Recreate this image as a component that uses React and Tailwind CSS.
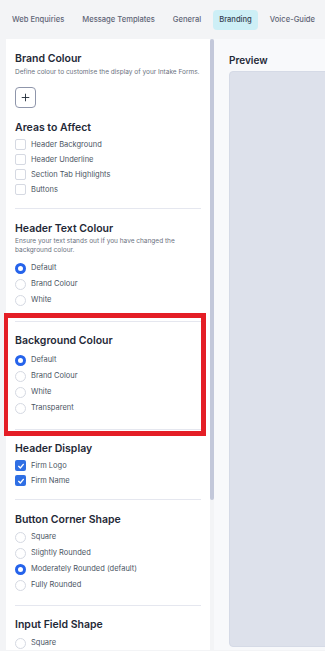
import { useState } from 'react';

const tabs = ['Web Enquiries', 'Message Templates', 'General', 'Branding', 'Voice-Guide'];

function Radio({ label, checked }) {
  return (
    <div className="flex h-[16px] items-center gap-[5px]">
      <span
        className={
          checked
            ? 'h-[11px] w-[11px] shrink-0 rounded-full border-[3px] border-[#2563eb] bg-white'
            : 'h-[11px] w-[11px] shrink-0 rounded-full border border-[#d5d9e2] bg-white'
        }
      />
      <span className="text-[7.5px] text-[#4b5563]">{label}</span>
    </div>
  );
}

function Checkbox({ label, checked }) {
  return (
    <div className="flex h-[15px] items-center gap-[5px]">
      {checked ? (
        <span className="flex h-[11px] w-[11px] shrink-0 items-center justify-center rounded-[2px] bg-[#2f6fe4]">
          <svg viewBox="0 0 12 12" className="h-[8px] w-[8px]" fill="none" stroke="white" strokeWidth="2" strokeLinecap="round" strokeLinejoin="round">
            <path d="M2.5 6.5l2.5 2.5 4.5-5.5" />
          </svg>
        </span>
      ) : (
        <span className="h-[11px] w-[11px] shrink-0 rounded-[2px] border border-[#d5d9e2] bg-white" />
      )}
      <span className="text-[7.5px] text-[#4b5563]">{label}</span>
    </div>
  );
}

function Title({ children }) {
  return <h3 className="h-[12px] text-[10.5px] font-semibold leading-[12px] text-[#1f2937]">{children}</h3>;
}

export default function App() {
  const [activeTab] = useState('Branding');

  return (
    <div className="relative flex h-[651px] w-[325px] flex-col overflow-hidden bg-[#f3f4f6] font-['Inter',sans-serif]">
      {/* Tabs */}
      <div className="flex h-[39px] shrink-0 items-center gap-[6px] pl-[6px]">
        {tabs.map((tab) => (
          <div
            key={tab}
            className={
              tab === activeTab
                ? 'flex h-[20px] items-center whitespace-nowrap rounded-[4px] bg-[#cdeff6] px-[6px] text-[7.6px] font-medium text-[#374151]'
                : 'flex h-[20px] items-center whitespace-nowrap px-[6px] text-[7.6px] font-medium text-[#5f6577]'
            }
          >
            {tab}
          </div>
        ))}
      </div>

      <div className="flex h-[611px] shrink-0">
        {/* Settings panel */}
        <div className="ml-[6px] w-[204px] shrink-0 overflow-hidden bg-white px-[9px]">
          {/* Brand Colour */}
          <div className="pt-[14px]">
            <Title>Brand Colour</Title>
            <p className="mt-[3px] whitespace-nowrap text-[6.5px] leading-[9px] text-[#6b7280]">
              Define colour to customise the display of your Intake Forms.
            </p>
            <button className="mt-[10px] flex h-[21px] w-[21px] items-center justify-center rounded-[4px] border border-[#8f96ab] bg-white">
              <svg viewBox="0 0 12 12" className="h-[9px] w-[9px]" fill="none" stroke="#1f2937" strokeWidth="1.2" strokeLinecap="round">
                <path d="M6 1.5v9M1.5 6h9" />
              </svg>
            </button>
          </div>

          {/* Areas to Affect */}
          <div className="mt-[14px] pb-[11px]">
            <Title>Areas to Affect</Title>
            <div className="mt-[3px]">
              <Checkbox label="Header Background" />
              <Checkbox label="Header Underline" />
              <Checkbox label="Section Tab Highlights" />
              <Checkbox label="Buttons" />
            </div>
          </div>

          {/* Header Text Colour */}
          <div className="border-t border-[#e5e7ef] pt-[14px] pb-[13px]">
            <Title>Header Text Colour</Title>
            <p className="mt-[2px] pr-[20px] text-[6.5px] leading-[9px] text-[#6b7280]">
              Ensure your text stands out if you have changed the background colour.
            </p>
            <div className="mt-[5px]">
              <Radio label="Default" checked />
              <Radio label="Brand Colour" />
              <Radio label="White" />
            </div>
          </div>

          {/* Background Colour */}
          <div className="border-t border-[#e5e7ef] pt-[13px] pb-[13px]">
            <Title>Background Colour</Title>
            <div className="mt-[5px]">
              <Radio label="Default" checked />
              <Radio label="Brand Colour" />
              <Radio label="White" />
              <Radio label="Transparent" />
            </div>
          </div>

          {/* Header Display */}
          <div className="border-t border-[#e5e7ef] pt-[13px] pb-[11px]">
            <Title>Header Display</Title>
            <div className="mt-[3px]">
              <Checkbox label="Firm Logo" checked />
              <Checkbox label="Firm Name" checked />
            </div>
          </div>

          {/* Button Corner Shape */}
          <div className="border-t border-[#e5e7ef] pt-[14px] pb-[12px]">
            <Title>Button Corner Shape</Title>
            <div className="mt-[3px]">
              <Radio label="Square" />
              <Radio label="Slightly Rounded" />
              <Radio label="Moderately Rounded (default)" checked />
              <Radio label="Fully Rounded" />
            </div>
          </div>

          {/* Input Field Shape */}
          <div className="border-t border-[#e5e7ef] pt-[13px]">
            <Title>Input Field Shape</Title>
            <div className="mt-[4px]">
              <Radio label="Square" />
            </div>
          </div>
        </div>

        {/* Scrollbar */}
        <div className="w-[4px] shrink-0 bg-[#f3f4f6]">
          <div className="h-[461px] rounded-full bg-[#c3c8da]" />
        </div>

        {/* Preview */}
        <div className="flex min-w-0 flex-1 flex-col bg-[#f8f9fb] pb-[3px] pl-[15px]">
          <h3 className="pt-[15px] text-[10px] font-semibold leading-[12px] text-[#1f2937]">Preview</h3>
          <div className="mt-[5px] w-[200px] flex-1 rounded-[4px] border border-[#d5dae6] bg-[#dde1eb]" />
        </div>
      </div>

      {/* Annotation highlight */}
      <div className="pointer-events-none absolute left-[4px] top-[313px] h-[123px] w-[202px] border-[5px] border-l-[4px] border-[#e41e26]" />
    </div>
  );
}
